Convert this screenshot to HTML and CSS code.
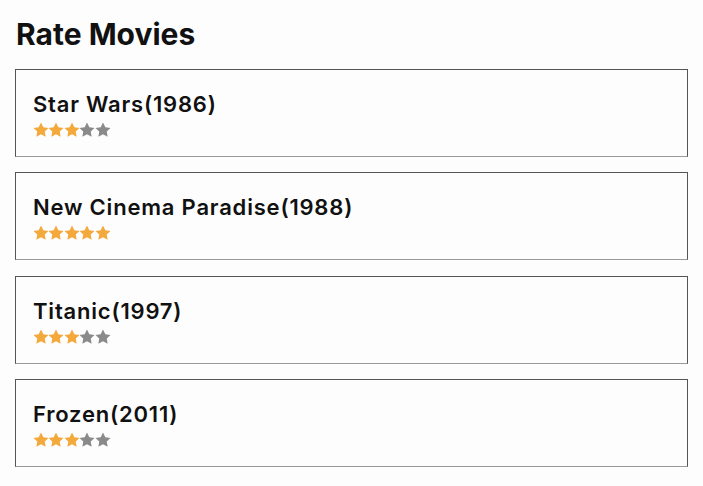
FILE: index.html
```html
<!DOCTYPE html>
<html>
<head>
<meta charset="utf-8">
<link rel="stylesheet" href="styles.css">
</head>
<body>
<h1 class="title">Rate Movies</h1>
<div class="list">
  <div class="card">
    <div class="name">Star Wars(1986)</div>
    <div class="stars">
      <svg class="star on" viewBox="0 0 24 24"><path d="M12 2l3.09 6.26L22 9.27l-5 4.87 1.18 6.88L12 17.77l-6.18 3.250L7 14.14 2 9.27l6.91-1.01L12 2z"/></svg>
      <svg class="star on" viewBox="0 0 24 24"><path d="M12 2l3.09 6.26L22 9.27l-5 4.87 1.18 6.88L12 17.77l-6.18 3.25L7 14.14 2 9.27l6.91-1.01L12 2z"/></svg>
      <svg class="star on" viewBox="0 0 24 24"><path d="M12 2l3.09 6.26L22 9.27l-5 4.87 1.18 6.88L12 17.77l-6.18 3.25L7 14.14 2 9.27l6.91-1.01L12 2z"/></svg>
      <svg class="star" viewBox="0 0 24 24"><path d="M12 2l3.09 6.26L22 9.27l-5 4.87 1.18 6.88L12 17.77l-6.18 3.25L7 14.14 2 9.27l6.91-1.01L12 2z"/></svg>
      <svg class="star" viewBox="0 0 24 24"><path d="M12 2l3.09 6.26L22 9.27l-5 4.87 1.18 6.88L12 17.77l-6.18 3.25L7 14.14 2 9.27l6.91-1.01L12 2z"/></svg>
    </div>
  </div>
  <div class="card">
    <div class="name">New Cinema Paradise(1988)</div>
    <div class="stars">
      <svg class="star on" viewBox="0 0 24 24"><path d="M12 2l3.09 6.26L22 9.27l-5 4.87 1.18 6.88L12 17.77l-6.18 3.25L7 14.14 2 9.27l6.91-1.01L12 2z"/></svg>
      <svg class="star on" viewBox="0 0 24 24"><path d="M12 2l3.09 6.26L22 9.27l-5 4.87 1.18 6.88L12 17.77l-6.18 3.25L7 14.14 2 9.27l6.91-1.01L12 2z"/></svg>
      <svg class="star on" viewBox="0 0 24 24"><path d="M12 2l3.09 6.26L22 9.27l-5 4.87 1.18 6.88L12 17.77l-6.18 3.25L7 14.14 2 9.27l6.91-1.01L12 2z"/></svg>
      <svg class="star on" viewBox="0 0 24 24"><path d="M12 2l3.09 6.26L22 9.27l-5 4.87 1.18 6.88L12 17.77l-6.18 3.25L7 14.14 2 9.27l6.91-1.01L12 2z"/></svg>
      <svg class="star on" viewBox="0 0 24 24"><path d="M12 2l3.09 6.26L22 9.27l-5 4.87 1.18 6.88L12 17.77l-6.18 3.25L7 14.14 2 9.27l6.91-1.01L12 2z"/></svg>
    </div>
  </div>
  <div class="card">
    <div class="name">Titanic(1997)</div>
    <div class="stars">
      <svg class="star on" viewBox="0 0 24 24"><path d="M12 2l3.09 6.26L22 9.27l-5 4.87 1.18 6.88L12 17.77l-6.18 3.25L7 14.14 2 9.27l6.91-1.01L12 2z"/></svg>
      <svg class="star on" viewBox="0 0 24 24"><path d="M12 2l3.09 6.26L22 9.27l-5 4.87 1.18 6.88L12 17.77l-6.18 3.25L7 14.14 2 9.27l6.91-1.01L12 2z"/></svg>
      <svg class="star on" viewBox="0 0 24 24"><path d="M12 2l3.09 6.26L22 9.27l-5 4.87 1.18 6.88L12 17.77l-6.18 3.25L7 14.14 2 9.27l6.91-1.01L12 2z"/></svg>
      <svg class="star" viewBox="0 0 24 24"><path d="M12 2l3.09 6.26L22 9.27l-5 4.87 1.18 6.88L12 17.77l-6.18 3.25L7 14.14 2 9.27l6.91-1.01L12 2z"/></svg>
      <svg class="star" viewBox="0 0 24 24"><path d="M12 2l3.09 6.26L22 9.27l-5 4.87 1.18 6.88L12 17.77l-6.18 3.25L7 14.14 2 9.27l6.91-1.01L12 2z"/></svg>
    </div>
  </div>
  <div class="card">
    <div class="name">Frozen(2011)</div>
    <div class="stars">
      <svg class="star on" viewBox="0 0 24 24"><path d="M12 2l3.09 6.26L22 9.27l-5 4.87 1.18 6.88L12 17.77l-6.18 3.25L7 14.14 2 9.27l6.91-1.01L12 2z"/></svg>
      <svg class="star on" viewBox="0 0 24 24"><path d="M12 2l3.09 6.26L22 9.27l-5 4.87 1.18 6.88L12 17.77l-6.18 3.25L7 14.14 2 9.27l6.91-1.01L12 2z"/></svg>
      <svg class="star on" viewBox="0 0 24 24"><path d="M12 2l3.09 6.26L22 9.27l-5 4.87 1.18 6.88L12 17.77l-6.18 3.25L7 14.14 2 9.27l6.91-1.01L12 2z"/></svg>
      <svg class="star" viewBox="0 0 24 24"><path d="M12 2l3.09 6.26L22 9.27l-5 4.87 1.18 6.88L12 17.77l-6.18 3.25L7 14.14 2 9.27l6.91-1.01L12 2z"/></svg>
      <svg class="star" viewBox="0 0 24 24"><path d="M12 2l3.09 6.26L22 9.27l-5 4.87 1.18 6.88L12 17.77l-6.18 3.25L7 14.14 2 9.27l6.91-1.01L12 2z"/></svg>
    </div>
  </div>
</div>
</body>
</html>
```
FILE: styles.css
```css
html, body {
  margin: 0;
  background: #fdfdfd;
}
body {
  padding: 16px 15px 0 15px;
  font-family: Inter, "Liberation Sans", sans-serif;
  color: #111;
}
.title {
  margin: 0 0 16px 1px;
  font-size: 30px;
  line-height: 37px;
  font-weight: 700;
  letter-spacing: 0;
}
.list {
  display: flex;
  flex-direction: column;
  gap: 15.3px;
}
.card {
  border: 1px solid #555;
  border-bottom-color: #999;
  padding: 21px 17px 16px 17px;
  height: 49px;
}
.name {
  font-size: 22px;
  line-height: 27px;
  font-weight: 600;
  letter-spacing: 0.8px;
}
.stars {
  display: flex;
  margin: 3px 0 0 -1.5px;
}
.star {
  width: 18px;
  height: 18px;
  margin-right: -2.5px;
  fill: #8a8a8a;
}
.star.on {
  fill: #f4a93c;
}
```
